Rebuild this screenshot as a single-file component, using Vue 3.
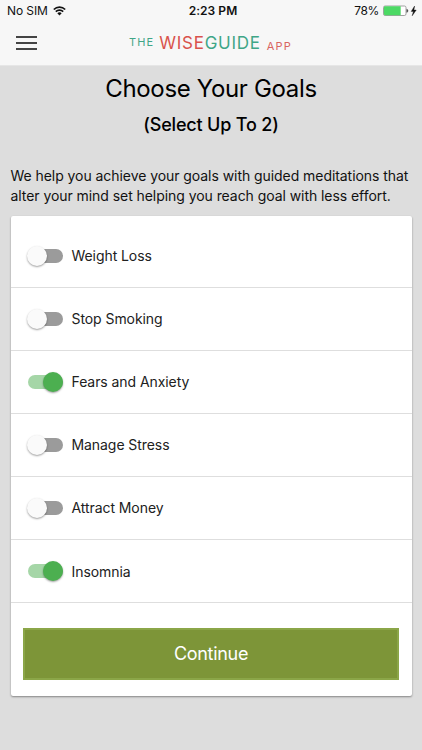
<script setup>
import { ref } from 'vue'

const goals = ref([
  { name: 'Weight Loss', on: false },
  { name: 'Stop Smoking', on: false },
  { name: 'Fears and Anxiety', on: true },
  { name: 'Manage Stress', on: false },
  { name: 'Attract Money', on: false },
  { name: 'Insomnia', on: true },
])
</script>

<template>
  <div class="screen">
    <header class="top">
      <div class="status">
        <div class="left">
          <span class="carrier">No SIM</span>
          <svg class="wifi" width="13" height="10" viewBox="0 0 13 10">
            <path d="M.8 3.5a8.2 8.2 0 0 1 11.4 0M2.8 5.6a5.3 5.3 0 0 1 7.4 0" fill="none" stroke="#111" stroke-width="1.7" />
            <path d="M6.5 9.6 4.3 7.3a3.2 3.2 0 0 1 4.4 0z" fill="#111" />
          </svg>
        </div>
        <span class="time">2:23 PM</span>
        <div class="right">
          <span class="percent">78%</span>
          <svg class="battery" width="34" height="12" viewBox="0 0 34 12">
            <rect x=".5" y="1" width="22.5" height="9.5" rx="1.6" fill="#fff" stroke="#8a8a8a" stroke-width=".8" />
            <path d="M2 1.3H17.7V10.2H2a1.1 1.1 0 0 1-1.1-1.1V2.4A1.1 1.1 0 0 1 2 1.3z" fill="#4cd964" />
            <path d="M23.8 4.2a1.7 1.7 0 0 1 0 3.2z" fill="#444" stroke="#444" stroke-width=".5" />
            <path d="M31.6 1 28.2 6.4h2.2L29.2 10.8 33.2 5.1h-2.3z" fill="#111" stroke="#111" stroke-width=".4" />
          </svg>
        </div>
      </div>
      <div class="nav">
        <button class="menu" aria-label="Menu"><i></i><i></i><i></i></button>
        <div class="brand">
          <span class="the">THE</span><span class="wise">WISE</span><span class="guide">GUIDE</span><span class="app">APP</span>
        </div>
      </div>
    </header>

    <main>
      <h1>Choose Your Goals</h1>
      <h2>(Select Up To 2)</h2>
      <p><span>We help you achieve your goals with guided meditations that</span><br><span>alter your mind set helping you reach goal with less effort.</span></p>
      <section class="card">
        <div v-for="g in goals" :key="g.name" class="row" @click="g.on = !g.on">
          <span class="toggle" :class="{ on: g.on }"><span class="thumb"></span></span>
          <span class="label">{{ g.name }}</span>
        </div>
        <button class="continue">Continue</button>
      </section>
    </main>
  </div>
</template>

<style>
body { margin: 0; background: #ddd; }
</style>

<style scoped>
.screen {
  width: 422px;
  height: 750px;
  overflow: hidden;
  background: #ddd;
  font-family: Inter, "Liberation Sans", sans-serif;
  color: #000;
}
.screen * { box-sizing: border-box; }
.screen span { white-space: nowrap; }
.top { height: 66px; background: #f7f7f7; border-bottom: 1px solid #e6e6e6; }
.status {
  display: grid;
  grid-template-columns: 1fr auto 1fr;
  align-items: center;
  height: 22px;
  padding: 0 5px 0 7px;
  font-size: 12px;
  line-height: 22px;
  color: #111;
}
.left { display: flex; align-items: center; gap: 6px; }
.carrier { letter-spacing: -0.1px; }
.wifi { margin: -1px 0 0 -0.5px; }
.right { display: flex; align-items: center; justify-content: flex-end; gap: 4px; }
.percent { letter-spacing: -0.4px; }
.time { font-weight: 600; letter-spacing: 0.05px; padding-left: 2px; }
.nav { display: flex; align-items: center; height: 42px; padding-left: 16px; }
.menu {
  display: flex;
  flex-direction: column;
  justify-content: space-between;
  width: 21px;
  height: 14px;
  padding: 0;
  border: 0;
  background: none;
}
.menu i { height: 2px; background: #444; }
.brand { display: flex; align-items: center; margin-left: 92px; line-height: 20px; font-size: 17px; }
.the { color: #3fa687; font-size: 11px; letter-spacing: 1.1px; margin: -3px 5px 0 0; }
.wise { color: #d9534c; letter-spacing: 0.75px; }
.guide { color: #3fa687; letter-spacing: 0.75px; }
.app { color: #d9655f; font-size: 11px; letter-spacing: 1.2px; margin: 5px 0 0 6px; }
main { padding: 8px 10.5px 0; }
h1 { margin: 0; text-align: center; font-size: 24px; font-weight: 400; line-height: 30px; letter-spacing: -0.34px; }
h2 { margin: 9px 0 0; text-align: center; font-size: 18px; font-weight: 500; line-height: 24px; letter-spacing: -0.17px; }
p { margin: 29px 0 0; font-size: 14px; line-height: 20.4px; height: 50px; letter-spacing: -0.06px; color: #111; }
.card {
  height: 480px;
  padding-top: 8.5px;
  border-radius: 2px;
  background: #fff;
  box-shadow: 0 1px 2px rgba(0, 0, 0, 0.4);
}
.row {
  display: flex;
  align-items: center;
  height: 63.1px;
  padding-left: 17px;
  border-bottom: 1px solid #dedede;
}
.toggle {
  position: relative;
  width: 35px;
  height: 14px;
  border-radius: 7px;
  background: #9b9b9b;
}
.thumb {
  position: absolute;
  top: -3px;
  left: -1px;
  width: 20px;
  height: 20px;
  border-radius: 50%;
  background: #fafafa;
  box-shadow: 0 1px 2px rgba(0, 0, 0, 0.38);
}
.toggle.on { background: #a5d6a7; }
.toggle.on .thumb { left: 15.5px; background: #4caf50; }
.label { margin-left: 9px; font-size: 14px; letter-spacing: -0.07px; color: #212121; }
.continue {
  display: block;
  width: 376px;
  height: 52px;
  margin: 24.5px 0 0 12.5px;
  padding: 0;
  border: 2px solid #8ba648;
  background: #7d9538;
  color: #fff;
  font: 400 18px/48px Inter, "Liberation Sans", sans-serif;
  letter-spacing: -0.3px;
}
</style>
